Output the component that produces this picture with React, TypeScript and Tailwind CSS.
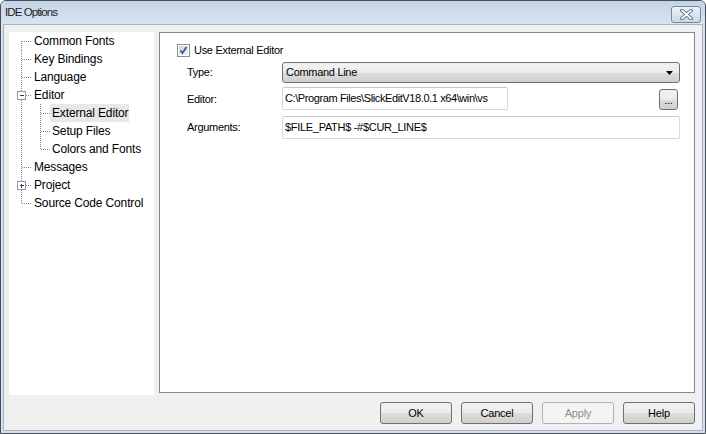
import React from 'react';

// Win7 basic-theme "IDE Options" dialog

type Node = {
  label: string;
  level: 1 | 2;
  box?: 'minus' | 'plus';
  last?: boolean;
  first?: boolean;
  selected?: boolean;
};

const TREE: Node[] = [
  { label: 'Common Fonts', level: 1, first: true },
  { label: 'Key Bindings', level: 1 },
  { label: 'Language', level: 1 },
  { label: 'Editor', level: 1, box: 'minus' },
  { label: 'External Editor', level: 2, selected: true },
  { label: 'Setup Files', level: 2 },
  { label: 'Colors and Fonts', level: 2, last: true },
  { label: 'Messages', level: 1 },
  { label: 'Project', level: 1, box: 'plus' },
  { label: 'Source Code Control', level: 1, last: true },
];

const DOT = '#8a8a8a';

const Connector = ({ node }: { node: Node }) => {
  const w = node.level === 1 ? 24 : 41;
  // x of level-1 trunk is 12.5 inside the tree panel
  return (
    <svg width={w} height={18} className="shrink-0" shapeRendering="crispEdges">
      {node.level === 1 ? (
        <>
          <line
            x1={12.5}
            y1={node.first ? 9 : 0}
            x2={12.5}
            y2={node.last ? 9 : 18}
            stroke={DOT}
            strokeDasharray="1 1"
          />
          <line x1={13} y1={9.5} x2={23} y2={9.5} stroke={DOT} strokeDasharray="1 1" />
          {node.box && (
            <>
              <rect x={8.5} y={5.5} width={8} height={8} fill="#fff" stroke="#8f9aa8" />
              <line x1={10.5} y1={9.5} x2={14.5} y2={9.5} stroke="#2c3e5a" />
              {node.box === 'plus' && <line x1={12.5} y1={7.5} x2={12.5} y2={11.5} stroke="#2c3e5a" />}
            </>
          )}
        </>
      ) : (
        <>
          <line x1={12.5} y1={0} x2={12.5} y2={18} stroke={DOT} strokeDasharray="1 1" />
          <line
            x1={31.5}
            y1={0}
            x2={31.5}
            y2={node.last ? 9 : 18}
            stroke={DOT}
            strokeDasharray="1 1"
          />
          <line x1={32} y1={9.5} x2={41} y2={9.5} stroke={DOT} strokeDasharray="1 1" />
        </>
      )}
    </svg>
  );
};

const CheckBox = () => (
  <svg width={13} height={13} className="shrink-0">
    <defs>
      <linearGradient id="cbg" x1="0" y1="0" x2="1" y2="1">
        <stop offset="0" stopColor="#cbcfd5" />
        <stop offset="1" stopColor="#f6f6f6" />
      </linearGradient>
    </defs>
    <rect x={0.5} y={0.5} width={12} height={12} fill="#fff" stroke="#8e8f8f" />
    <rect x={2} y={2} width={9} height={9} fill="url(#cbg)" />
    <path d="M3.5 6.5 L5.5 9 L9.5 3" fill="none" stroke="#3b58a0" strokeWidth={1.8} />
  </svg>
);

const Button = ({ label, disabled }: { label: string; disabled?: boolean }) => (
  <div
    className={`w-[72px] h-[22px] rounded-[3px] border flex items-center justify-center text-[11px] tracking-[-0.2px] ${
      disabled
        ? 'border-[#adb2b5] bg-[#f4f4f4] text-[#8d8d8d]'
        : 'border-[#707070] bg-[linear-gradient(#f2f2f2_0%,#ebebeb_50%,#dddddd_51%,#cfcfcf_100%)] text-black'
    }`}
  >
    {label}
  </div>
);

export default function App() {
  return (
    <div
      className="w-[706px] h-[434px] flex flex-col overflow-hidden rounded-t-[6px] border border-[#474d55] bg-[#d6e1ef]"
      style={{ fontFamily: '"Liberation Sans", Arial, sans-serif' }}
    >
      {/* title bar */}
      <div className="h-[23px] shrink-0 flex items-center justify-between bg-[linear-gradient(#c3d3e7,#d9e4f1)]">
        <span className="pl-[4px] pt-[1px] text-[11.5px] tracking-[-0.9px] text-[#1e1e1e]">IDE Options</span>
        <div className="mr-[4px] mt-[3px] w-[30px] h-[17px] rounded-[3px] border border-[#7387a1] bg-[linear-gradient(#eef3f9,#c9d6e6)] flex items-center justify-center">
          <svg width={13} height={11} viewBox="0 0 13 11">
            <path
              d="M2 1.5 L11 9.5 M11 1.5 L2 9.5"
              stroke="#4f5d70"
              strokeWidth={3.6}
              strokeLinecap="round"
              fill="none"
            />
            <path d="M2 1.5 L11 9.5 M11 1.5 L2 9.5" stroke="#fff" strokeWidth={1.8} strokeLinecap="round" fill="none" />
          </svg>
        </div>
      </div>

      {/* frame */}
      <div className="flex-1 px-[2px] pb-[2px] flex">
        <div className="flex-1 flex flex-col border border-[#a7b3c3] bg-[#f0f0f0] pt-[7px] pl-[5px] pr-[6px]">
          <div className="flex gap-[5px] items-start">
            {/* tree */}
            <div className="w-[145px] h-[363px] bg-white text-[12px] tracking-[-0.15px] text-black">
              {TREE.map((n) => (
                <div key={n.label} className="h-[18px] flex items-center">
                  <Connector node={n} />
                  <span
                    className={`h-[18px] flex items-center whitespace-nowrap ${
                      n.level === 1 ? 'pl-[1px]' : 'pl-[2px] pr-[1px]'
                    } ${n.selected ? 'bg-[#e8e8e8]' : ''}`}
                  >
                    {n.label}
                  </span>
                </div>
              ))}
            </div>

            {/* settings panel */}
            <div className="w-[536px] h-[361px] border border-[#828790] bg-white pt-[11px] pl-[17px] text-[11px] tracking-[-0.3px] text-black">
              <div className="h-[13px] flex items-center gap-[4px]">
                <CheckBox />
                <span>Use External Editor</span>
              </div>

              <div className="mt-[5px] flex items-center">
                <span className="w-[105px] pl-[10px]">Type:</span>
                <div className="w-[398px] h-[21px] rounded-[3px] border border-[#707070] bg-[linear-gradient(#f2f2f2_0%,#ebebeb_50%,#dddddd_51%,#cfcfcf_100%)] flex items-center justify-between pl-[3px] pr-[6px]">
                  <span>Command Line</span>
                  <svg width={7} height={4} viewBox="0 0 7 4">
                    <path d="M0 0 H7 L3.5 4 Z" fill="#000" />
                  </svg>
                </div>
              </div>

              <div className="mt-[4px] flex items-center">
                <span className="w-[105px] pl-[10px] pt-[2px]">Editor:</span>
                <div className="w-[398px] flex items-center">
                  <div className="w-[226px] h-[23px] rounded-[2px] border border-[#d6d9dd] border-t-[#c4c8cd] bg-white flex items-center pl-[2px] overflow-hidden whitespace-nowrap tracking-[-0.4px]">
                    C:\Program Files\SlickEditV18.0.1 x64\win\vs
                  </div>
                  <div className="ml-auto mr-[2px] mt-[2px] w-[19px] h-[21px] rounded-[3px] border border-[#707070] bg-[linear-gradient(#f2f2f2_0%,#ebebeb_50%,#dddddd_51%,#cfcfcf_100%)] flex items-end justify-center pb-[3px] text-[11px] leading-none">
                    ...
                  </div>
                </div>
              </div>

              <div className="mt-[6px] flex items-center">
                <span className="w-[105px] pl-[10px]">Arguments:</span>
                <div className="w-[398px] h-[23px] rounded-[2px] border border-[#d6d9dd] border-t-[#c4c8cd] bg-white flex items-center pl-[2px] whitespace-nowrap">
                  $FILE_PATH$ -#$CUR_LINE$
                </div>
              </div>
            </div>
          </div>

          {/* buttons */}
          <div className="mt-[7px] flex justify-end gap-[9px] pr-[1px]">
            <Button label="OK" />
            <Button label="Cancel" />
            <Button label="Apply" disabled />
            <Button label="Help" />
          </div>
        </div>
      </div>
    </div>
  );
}
